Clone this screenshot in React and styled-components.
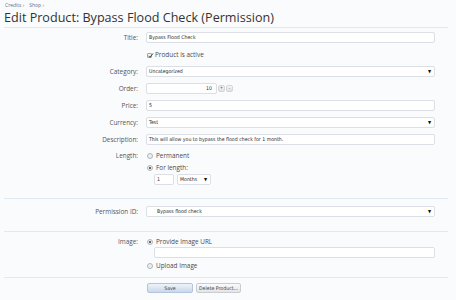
import React from 'react';
import styled, { createGlobalStyle } from 'styled-components';

const Global = createGlobalStyle`
  html, body { margin: 0; padding: 0; background: #fafbfd; }
  body { font-family: "Open Sans", "DejaVu Sans", sans-serif; color: #333; }
  * { box-sizing: border-box; }
`;

const Page = styled.div`
  width: 456px;
  height: 300px;
  overflow: hidden;
  padding: 2px 8px 0 4px;
`;

const Breadcrumb = styled.div`
  display: flex;
  gap: 5px;
  font-size: 5px;
  line-height: 6px;
  height: 6px;
  color: #5b6f92;
  padding-left: 1px;
`;

const Heading = styled.h1`
  margin: 2px 0 0;
  font-size: 12.6px;
  font-weight: normal;
  line-height: 16px;
  color: #333;
  padding-bottom: 1px;
  border-bottom: 1px solid #e3e8ef;
`;

const Form = styled.form`
  display: flex;
  flex-direction: column;
  padding-top: 4px;
`;

const Row = styled.div`
  display: grid;
  grid-template-columns: 134px 289px;
  column-gap: 8px;
  align-items: start;
  margin-top: ${p => p.$mt ?? 6}px;
`;

const Label = styled.div`
  text-align: right;
  font-size: 6.4px;
  line-height: ${p => p.$lh ?? 11}px;
  color: #555;
`;

const Control = styled.div`
  display: flex;
  flex-direction: column;
  align-items: flex-start;
`;

const Box = styled.div`
  width: ${p => p.$w ? `${p.$w}px` : '100%'};
  height: ${p => p.$h ?? 11}px;
  border: 1px solid #dcdfe6;
  border-radius: 2px;
  background: #fff;
  font-family: "DejaVu Sans Condensed", "Liberation Sans", sans-serif;
  font-size: 5.2px;
  line-height: ${p => (p.$h ?? 11) - 2}px;
  color: #2a2a2a;
  padding: 0 ${p => p.$pr ?? 2}px 0 ${p => p.$pl ?? 2}px;
  display: flex;
  align-items: center;
  justify-content: ${p => p.$right ? 'flex-end' : 'space-between'};
  margin-left: ${p => p.$ml ?? 0}px;
  white-space: nowrap;
`;

const Arrow = styled.span`
  font-size: 4.5px;
  color: #111;
  margin-right: 1px;
`;

const Inline = styled.div`
  display: flex;
  align-items: center;
  gap: ${p => p.$gap ?? 2}px;
  margin-top: ${p => p.$mt ?? 0}px;
  margin-left: ${p => p.$ml ?? 0}px;
`;

const Spin = styled.span`
  width: 7px;
  height: 7px;
  border: 1px solid #d3d6dc;
  border-radius: 2px;
  background: linear-gradient(#f7f7f8, #dfe0e3);
  font-size: 5px;
  line-height: 5px;
  text-align: center;
  color: #666;
`;

const Check = styled.span`
  width: 5px;
  height: 5px;
  border: 1px solid #a3a8b0;
  border-radius: 1px;
  background: #f2f2f2;
  position: relative;
  display: inline-block;
  flex: none;
`;

const Tick = styled.svg`
  position: absolute;
  left: -1px;
  top: -2px;
`;

const Radio = styled.span`
  width: 6px;
  height: 6px;
  border: 1px solid #b0b5bc;
  border-radius: 50%;
  background: ${p => p.$on ? 'radial-gradient(circle, #666 0 1.1px, #eceef1 1.4px)' : '#eceef1'};
  display: inline-block;
  flex: none;
`;

const OptText = styled.span`
  font-size: 6.4px;
  line-height: 10px;
  color: #4a4a4a;
`;

const Separator = styled.div`
  height: 1px;
  background: #e1e9f2;
  margin: ${p => p.$m ?? '12px 0 0'};
`;

const Button = styled.span`
  height: 10px;
  width: ${p => p.$w}px;
  border: 1px solid ${p => p.$primary ? '#b4c4db' : '#c9ccd1'};
  border-radius: 2px;
  background: ${p => p.$primary
    ? 'linear-gradient(#eef3fa, #c9d8ec)'
    : 'linear-gradient(#fbfbfb, #e3e4e6)'};
  font-family: "DejaVu Sans Condensed", "Liberation Sans", sans-serif;
  font-size: 5.2px;
  line-height: 8px;
  text-align: center;
  color: #444;
`;

function CheckBox() {
  return (
    <Check>
      <Tick width="7" height="7" viewBox="0 0 7 7">
        <path d="M1.5 3.8 L3 5.3 L6 1.5" fill="none" stroke="#444" strokeWidth="1" />
      </Tick>
    </Check>
  );
}

function Select({ children, w, pl }) {
  return (
    <Box $w={w} $pl={pl}>
      <span>{children}</span>
      <Arrow>▼</Arrow>
    </Box>
  );
}

export default function App() {
  return (
    <Page>
      <Global />
      <Breadcrumb>
        <span>Credits ›</span>
        <span>Shop ›</span>
      </Breadcrumb>
      <Heading>Edit Product: Bypass Flood Check (Permission)</Heading>
      <Form>
        <Row $mt={0}>
          <Label>Title:</Label>
          <Box>Bypass Flood Check</Box>
        </Row>
        <Row $mt={7}>
          <span />
          <Inline $ml={1} $gap={3}>
            <CheckBox />
            <OptText>Product is active</OptText>
          </Inline>
        </Row>
        <Row $mt={6}>
          <Label>Category:</Label>
          <Select>Uncategorized</Select>
        </Row>
        <Row>
          <Label>Order:</Label>
          <Inline $gap={1}>
            <Box $w={71} $right $pr={4}>10</Box>
            <Spin>+</Spin>
            <Spin>-</Spin>
          </Inline>
        </Row>
        <Row>
          <Label>Price:</Label>
          <Box>5</Box>
        </Row>
        <Row>
          <Label>Currency:</Label>
          <Select>Test</Select>
        </Row>
        <Row>
          <Label>Description:</Label>
          <Box>This will allow you to bypass the flood check for 1 month.</Box>
        </Row>
        <Row $mt={6}>
          <Label $lh={10}>Length:</Label>
          <Control>
            <Inline $ml={1} $gap={3}>
              <Radio />
              <OptText>Permanent</OptText>
            </Inline>
            <Inline $ml={1} $gap={3} $mt={2}>
              <Radio $on />
              <OptText>For length:</OptText>
            </Inline>
            <Inline $ml={8} $gap={3} $mt={1}>
              <Box $w={20}>1</Box>
              <Select w={34}>Months</Select>
            </Inline>
          </Control>
        </Row>
        <Separator $m="13px 0 0" />
        <Row $mt={7}>
          <Label $lh={12}>Permission ID:</Label>
          <Select pl={10}>Bypass flood check</Select>
        </Row>
        <Separator $m="13px 0 0" />
        <Row $mt={5}>
          <Label $lh={10}>Image:</Label>
          <Control>
            <Inline $ml={1} $gap={3}>
              <Radio $on />
              <OptText>Provide Image URL</OptText>
            </Inline>
            <Box $ml={8} $w={281} $h={11}> </Box>
            <Inline $ml={1} $gap={3} $mt={3}>
              <Radio />
              <OptText>Upload Image</OptText>
            </Inline>
          </Control>
        </Row>
        <Separator $m="6px 0 0" />
        <Row $mt={5}>
          <span />
          <Inline $gap={3} $ml={1}>
            <Button $primary $w={46}>Save</Button>
            <Button $w={45}>Delete Product...</Button>
          </Inline>
        </Row>
      </Form>
    </Page>
  );
}
